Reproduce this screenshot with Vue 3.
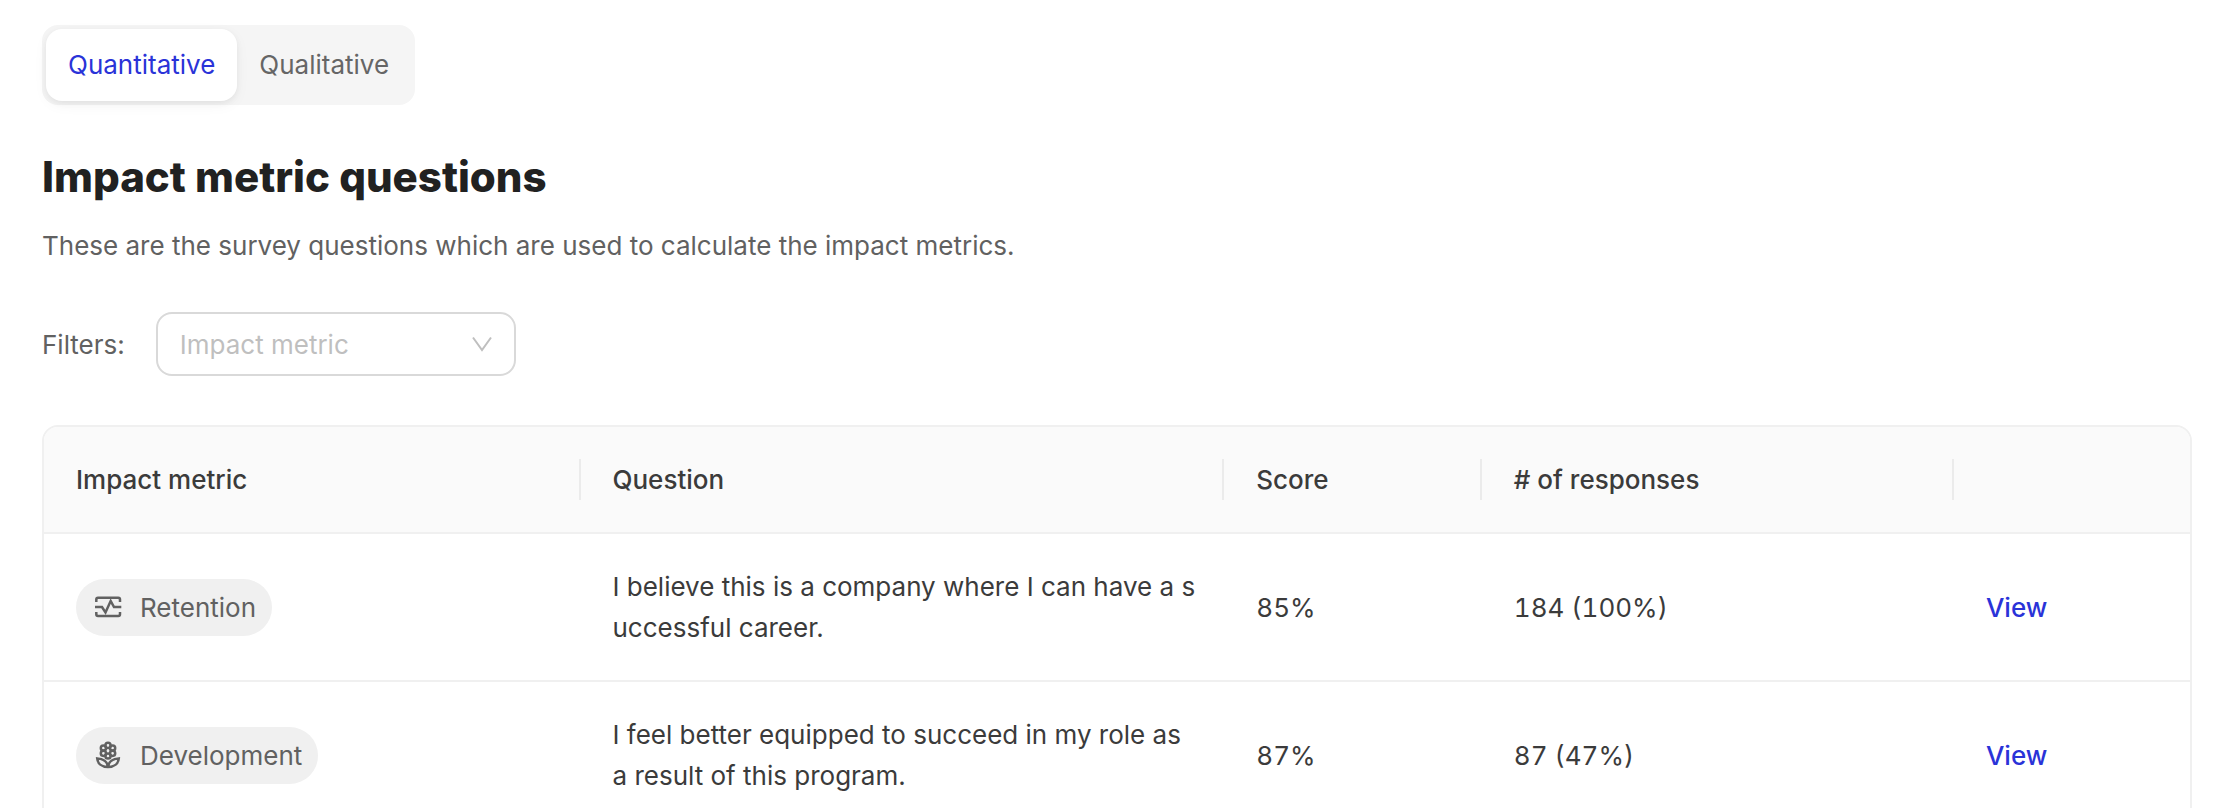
<script setup>
import { ref, computed } from 'vue'

const tabs = ['Quantitative', 'Qualitative']
const activeTab = ref('Quantitative')
const metric = ref('')

const rows = [
  {
    metric: 'Retention',
    question: 'I believe this is a company where I can have a successful career.',
    score: '85%',
    responses: '184 (100%)'
  },
  {
    metric: 'Development',
    question: 'I feel better equipped to succeed in my role as a result of this program.',
    score: '87%',
    responses: '87 (47%)'
  }
]

const visibleRows = computed(() =>
  metric.value ? rows.filter((r) => r.metric === metric.value) : rows
)
</script>

<template>
  <main class="page">
    <div class="segmented" role="tablist">
      <button
        v-for="tab in tabs"
        :key="tab"
        type="button"
        role="tab"
        class="segment"
        :class="{ active: tab === activeTab }"
        :aria-selected="tab === activeTab"
        @click="activeTab = tab"
      >
        {{ tab }}
      </button>
    </div>

    <h1 class="title">Impact metric questions</h1>
    <p class="lead">These are the survey questions which are used to calculate the impact metrics.</p>

    <div class="filters">
      <label for="metric-filter">Filters:</label>
      <div class="select-box">
        <select id="metric-filter" v-model="metric" :class="{ empty: !metric }">
          <option value="">Impact metric</option>
          <option v-for="r in rows" :key="r.metric" :value="r.metric">{{ r.metric }}</option>
        </select>
        <svg class="chevron" viewBox="0 0 24 24" aria-hidden="true">
          <path d="M3 5.500L12 18L21 5.500" />
        </svg>
      </div>
    </div>

    <div class="table-frame">
      <table>
        <colgroup>
          <col class="c-metric" />
          <col class="c-question" />
          <col class="c-score" />
          <col class="c-responses" />
          <col class="c-action" />
        </colgroup>
        <thead>
          <tr>
            <th scope="col"><div class="head">Impact metric</div></th>
            <th scope="col"><div class="head">Question</div></th>
            <th scope="col"><div class="head">Score</div></th>
            <th scope="col"><div class="head"># of responses</div></th>
            <th scope="col" aria-label="Actions"><div class="head"></div></th>
          </tr>
        </thead>
        <tbody>
          <tr v-for="row in visibleRows" :key="row.metric">
            <td>
              <span class="tag">
                <svg v-if="row.metric === 'Retention'" class="tag-icon" viewBox="0 0 32 32" aria-hidden="true">
                  <path d="M4.300 11V8.500Q4.300 6.800 6 6.800H26.300Q28 6.800 28 8.500V11M4.300 21V23.200Q4.300 24.900 6 24.900H26.300Q28 24.900 28 23.200V21" />
                  <path d="M3 16H10L13.500 21.500L18.700 10L22 16H29.300" />
                </svg>
                <svg v-else class="tag-icon" viewBox="0 0 32 32" aria-hidden="true">
                  <path d="M5.200 19.400C11 19.600 15.500 22.500 16 28C9.500 28 5.600 24.500 5.200 19.400ZM26.800 19.400C21 19.600 16.500 22.500 16 28C22.500 28 26.400 24.500 26.800 19.400Z" />
                  <circle cx="16" cy="6.400" r="2.600" />
                  <circle cx="20.600" cy="9" r="2.600" />
                  <circle cx="20.600" cy="14.300" r="2.600" />
                  <circle cx="16" cy="17" r="2.600" />
                  <circle cx="11.400" cy="14.300" r="2.600" />
                  <circle cx="11.400" cy="9" r="2.600" />
                </svg>
                {{ row.metric }}
              </span>
            </td>
            <td class="question">{{ row.question }}</td>
            <td class="num">{{ row.score }}</td>
            <td class="num">{{ row.responses }}</td>
            <td><a href="#" class="view">View</a></td>
          </tr>
        </tbody>
      </table>
    </div>
  </main>
</template>

<style>
body {
  background: #fff;
}
</style>

<style scoped>
.page {
  padding: 25px 44px 0 42px;
  font-family: Inter, "Liberation Sans", sans-serif;
  font-size: 26px;
  line-height: 41px;
  color: #3b3b3b;
}
.segmented {
  display: inline-flex;
  padding: 4px;
  background: #f5f5f5;
  border-radius: 16px;
}
.segment {
  padding: 0 22px 2px;
  height: 72px;
  border: 0;
  border-radius: 16px;
  background: transparent;
  font: inherit;
  color: #666;
  cursor: pointer;
}
.segment.active {
  background: #fff;
  color: #2a33d8;
  box-shadow: 0 4px 16px -2px rgba(0, 0, 0, 0.06), 0 2px 6px rgba(0, 0, 0, 0.05);
}
.title {
  margin: 48px 0 0;
  font-size: 42px;
  line-height: 48px;
  font-weight: 800;
  color: #212121;
}
.lead {
  margin: 24px 0 0;
  color: #616161;
}
.filters {
  display: flex;
  align-items: center;
  gap: 31px;
  margin-top: 46px;
  color: #616161;
}
.select-box {
  display: grid;
  align-items: center;
  width: 360px;
}
select {
  grid-area: 1 / 1;
  width: 100%;
  height: 64px;
  padding: 0 22px;
  border: 2px solid #d9d9d9;
  border-radius: 16px;
  background: #fff;
  appearance: none;
  font: inherit;
  color: #3b3b3b;
}
select.empty {
  color: #bfbfbf;
}
.chevron {
  grid-area: 1 / 1;
  justify-self: end;
  width: 24px;
  height: 24px;
  margin-right: 22px;
  pointer-events: none;
  fill: none;
  stroke: #bfbfbf;
  stroke-width: 2;
}
.table-frame {
  margin-top: 49px;
  border: 2px solid #f0f0f0;
  border-radius: 16px;
  overflow: hidden;
}
table {
  width: 100%;
  table-layout: fixed;
  border-collapse: separate;
  border-spacing: 0;
}
.c-metric { width: 25%; }
.c-question { width: 30%; }
.c-score { width: 12%; }
.c-responses { width: 22%; }
.c-action { width: 11%; }
th {
  padding: 32px 0;
  background: #fafafa;
  border-bottom: 2px solid #f0f0f0;
  font-weight: 500;
  text-align: left;
}
.head {
  height: 41px;
  padding-left: 32px;
  border-right: 2px solid #ebebeb;
}
th:last-child .head {
  border-right: 0;
}
td {
  padding: 32px;
  border-bottom: 2px solid #f0f0f0;
  vertical-align: middle;
}
.question {
  padding-right: 24px;
  word-break: break-all;
}
.num {
  font-variant-numeric: tabular-nums;
}
.tag {
  display: inline-flex;
  align-items: center;
  gap: 16px;
  height: 57px;
  padding: 0 16px;
  border-radius: 29px;
  background: #f0f0f0;
  color: #616161;
  vertical-align: middle;
}
.tag-icon {
  width: 32px;
  height: 32px;
  fill: none;
  stroke: #616161;
  stroke-width: 2.500;
}
.view {
  color: #2a33d8;
  font-weight: 500;
  text-decoration: none;
}
</style>
